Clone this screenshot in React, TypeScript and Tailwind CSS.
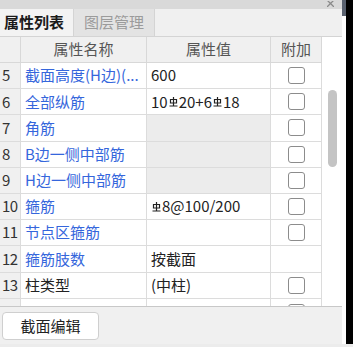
import React from "react";

type Row = {
  no: number;
  name: string;
  blue: boolean;
  value: React.ReactNode;
  gray?: boolean;
  check: boolean;
};

const Gang = () => (
  <svg
    width="9"
    height="10"
    viewBox="0 0 9 10"
    className="inline-block align-[4px] mx-[1px]"
    fill="none"
    stroke="currentColor"
    strokeWidth="1.2"
  >
    <path d="M4.5 0V8.5M1.5 2.5H7.5V6H1.5ZM0.5 9H8.5" />
  </svg>
);

const rows: Row[] = [
  { no: 5, name: "截面高度(H边)(...", blue: true, value: "600", check: true },
  {
    no: 6,
    name: "全部纵筋",
    blue: true,
    value: (
      <>
        10<Gang />20+6<Gang />18
      </>
    ),
    check: true,
  },
  { no: 7, name: "角筋", blue: true, value: "", gray: true, check: true },
  { no: 8, name: "B边一侧中部筋", blue: true, value: "", gray: true, check: true },
  { no: 9, name: "H边一侧中部筋", blue: true, value: "", gray: true, check: true },
  {
    no: 10,
    name: "箍筋",
    blue: true,
    value: (
      <>
        <Gang />8@100/200
      </>
    ),
    check: true,
  },
  { no: 11, name: "节点区箍筋", blue: true, value: "", check: true },
  { no: 12, name: "箍筋肢数", blue: true, value: "按截面", check: false },
  { no: 13, name: "柱类型", blue: false, value: "(中柱)", check: true },
];

const Check = () => (
  <div className="w-[17px] h-[17px] rounded-[3px] border border-[#8c8c8c] bg-white" />
);

const App = () => {
  return (
    <div className="w-[353px] h-[347px] flex flex-col bg-[#e9e9e9] overflow-hidden text-[15px] font-['Noto_Sans_CJK_SC',sans-serif] text-[#222]">
      <div className="flex h-[344px]">
        {/* panel */}
        <div className="w-[342px] flex flex-col bg-[#f0f0f0]">
          <div className="h-[9px] bg-[#d9d9d9] flex justify-end items-end pr-[8px] overflow-hidden">
            <svg width="7" height="6" viewBox="0 0 7 6" className="mb-[2px] text-[#8a8a8a]">
              <path d="M0 -1L7 6M7 -1L0 6" stroke="currentColor" strokeWidth="1.3" />
            </svg>
          </div>
          <div className="h-[28px] flex border-b border-[#d4d4d4] bg-[#f0f0f0]">
            <div className="w-[74px] flex items-center pl-[4px] font-bold text-[#1a1a1a] bg-[#f3f3f3] border-r border-[#d4d4d4]">
              属性列表
            </div>
            <div className="w-[81px] flex items-center justify-center text-[#9b9b9b] bg-[#e3e3e3] border-r border-[#d4d4d4]">
              图层管理
            </div>
          </div>

          {/* table */}
          <div className="h-[270px] flex bg-white border-b border-[#c8c8c8] overflow-hidden">
            <div className="w-[322px] flex flex-col">
              <div className="h-[26px] shrink-0 grid grid-cols-[21px_126px_124px_51px] bg-[#f0f0f0] text-[#555] border-b border-[#d8d8d8]">
                <div className="border-r border-[#d8d8d8]" />
                <div className="border-r border-[#d8d8d8] flex items-center justify-center">属性名称</div>
                <div className="border-r border-[#d8d8d8] flex items-center justify-center">属性值</div>
                <div className="border-r border-[#d8d8d8] flex items-center justify-center">附加</div>
              </div>
              {rows.map((r) => (
                <div
                  key={r.no}
                  className="h-[26.2px] shrink-0 grid grid-cols-[21px_126px_124px_51px] border-b border-[#dcdcdc]"
                >
                  <div className="bg-[#f0f0f0] border-r border-[#dcdcdc] flex items-center pl-[2px] text-[#333] tracking-[-0.5px]">
                    {r.no}
                  </div>
                  <div
                    className={`border-r border-[#dcdcdc] flex items-center pl-[4px] whitespace-nowrap overflow-hidden ${
                      r.blue ? "text-[#3566dc]" : "text-[#222]"
                    }`}
                  >
                    {r.name}
                  </div>
                  <div
                    className={`border-r border-[#dcdcdc] flex items-center pl-[4px] whitespace-nowrap ${
                      r.gray ? "bg-[#ececec]" : ""
                    }`}
                  >
                    {r.value}
                  </div>
                  <div className="border-r border-[#dcdcdc] flex items-center justify-center">
                    {r.check && <Check />}
                  </div>
                </div>
              ))}
              <div className="h-[26px] shrink-0 grid grid-cols-[21px_126px_124px_51px]">
                <div className="bg-[#f0f0f0] border-r border-[#dcdcdc]" />
                <div className="border-r border-[#dcdcdc]" />
                <div className="border-r border-[#dcdcdc]" />
                <div className="border-r border-[#dcdcdc] flex justify-center pt-[5px]">
                  <Check />
                </div>
              </div>
            </div>
            {/* scrollbar */}
            <div className="w-[20px] flex justify-center pt-[53px]">
              <div className="w-[9px] h-[77px] rounded-full bg-[#c4c4c4]" />
            </div>
          </div>

          <div className="flex-1 pt-[5px] pl-[2px]">
            <button className="w-[97px] h-[28px] rounded-[4px] border border-[#cfcfcf] bg-white text-[#222] text-[15px]">
              截面编辑
            </button>
          </div>
        </div>
        <div className="w-[4px] flex flex-col bg-white">
          <div className="h-[16px] bg-[#5a6270]" />
        </div>
        <div className="w-[7px] bg-black" />
      </div>
      <div className="flex-1 bg-[#ececec]" />
    </div>
  );
};

export default App;
